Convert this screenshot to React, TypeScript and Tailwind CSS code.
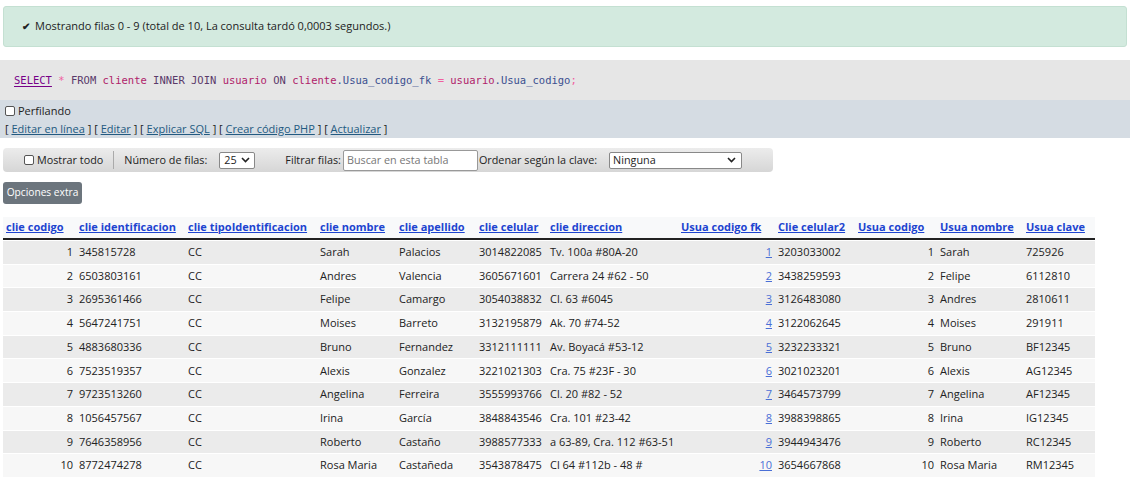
import React from 'react';

const cols = [
  { key: 'clie codigo', w: 'w-[73px]', num: true },
  { key: 'clie identificacion', w: 'w-[109px]' },
  { key: 'clie tipoIdentificacion', w: 'w-[132px]' },
  { key: 'clie nombre', w: 'w-[79px]' },
  { key: 'clie apellido', w: 'w-[80px]' },
  { key: 'clie celular', w: 'w-[71px]' },
  { key: 'clie direccion', w: 'w-[131px]' },
  { key: 'Usua codigo fk', w: 'w-[97px]', num: true, link: true },
  { key: 'Clie celular2', w: 'w-[80px]' },
  { key: 'Usua codigo', w: 'w-[82px]', num: true },
  { key: 'Usua nombre', w: 'w-[86px]' },
  { key: 'Usua clave', w: 'w-[72px]' },
];

const rows = [
  ['1', '345815728', 'CC', 'Sarah', 'Palacios', '3014822085', 'Tv. 100a #80A-20', '1', '3203033002', '1', 'Sarah', '725926'],
  ['2', '6503803161', 'CC', 'Andres', 'Valencia', '3605671601', 'Carrera 24 #62 - 50', '2', '3438259593', '2', 'Felipe', '6112810'],
  ['3', '2695361466', 'CC', 'Felipe', 'Camargo', '3054038832', 'Cl. 63 #6045', '3', '3126483080', '3', 'Andres', '2810611'],
  ['4', '5647241751', 'CC', 'Moises', 'Barreto', '3132195879', 'Ak. 70 #74-52', '4', '3122062645', '4', 'Moises', '291911'],
  ['5', '4883680336', 'CC', 'Bruno', 'Fernandez', '3312111111', 'Av. Boyacá #53-12', '5', '3232233321', '5', 'Bruno', 'BF12345'],
  ['6', '7523519357', 'CC', 'Alexis', 'Gonzalez', '3221021303', 'Cra. 75 #23F - 30', '6', '3021023201', '6', 'Alexis', 'AG12345'],
  ['7', '9723513260', 'CC', 'Angelina', 'Ferreira', '3555993766', 'Cl. 20 #82 - 52', '7', '3464573799', '7', 'Angelina', 'AF12345'],
  ['8', '1056457567', 'CC', 'Irina', 'García', '3848843546', 'Cra. 101 #23-42', '8', '3988398865', '8', 'Irina', 'IG12345'],
  ['9', '7646358956', 'CC', 'Roberto', 'Castaño', '3988577333', 'a 63-89, Cra. 112 #63-51', '9', '3944943476', '9', 'Roberto', 'RC12345'],
  ['10', '8772474278', 'CC', 'Rosa Maria', 'Castañeda', '3543878475', 'Cl 64 #112b - 48 #', '10', '3654667868', '10', 'Rosa Maria', 'RM12345'],
];

function Checkbox() {
  return <span className="inline-block w-[10px] h-[10px] border border-[#555] rounded-[2px] bg-white mr-[3px] align-[-1px]" />;
}

function Chevron() {
  return (
    <svg width="9" height="6" viewBox="0 0 9 6" className="ml-auto">
      <path d="M1 1 L4.5 4.5 L8 1" fill="none" stroke="#222" strokeWidth="1.6" />
    </svg>
  );
}

export default function App() {
  return (
    <div className="w-[1130px] h-[485px] bg-white text-[#222] overflow-hidden font-['Open_Sans','Noto_Sans',sans-serif] text-[11px]">
      <div className="px-[3px] pt-[6px]">
        {/* message */}
        <div className="h-[41px] bg-[#d3eadf] border border-[#c4e0d2] rounded-[3px] flex items-center pl-[18px] text-[11px] text-[#222]">
          <span className="text-[10px] font-bold mr-[5px]">✔</span>
          Mostrando filas 0 - 9 (total de 10, La consulta tardó 0,0003 segundos.)
        </div>
      </div>

      {/* SQL */}
      <div className="mt-[13px] h-[40px] bg-[#e6e6e6] flex items-center pl-[14px] pt-[1px] font-['DejaVu_Sans_Mono','Liberation_Mono',monospace] text-[10.5px] whitespace-pre">
        <span className="text-[#770088] underline underline-offset-2">SELECT</span>
        <span> </span>
        <span className="text-[#f0609e]">*</span>
        <span className="text-[#5a3a6a]"> FROM </span>
        <span className="text-[#b0226a]">cliente</span>
        <span className="text-[#5a3a6a]"> INNER JOIN </span>
        <span className="text-[#b0226a]">usuario</span>
        <span className="text-[#5a3a6a]"> ON </span>
        <span className="text-[#b0226a]">cliente</span>
        <span className="text-[#3b4f8f]">.Usua_codigo_fk </span>
        <span className="text-[#f0609e]">=</span>
        <span> </span>
        <span className="text-[#b0226a]">usuario</span>
        <span className="text-[#3b4f8f]">.Usua_codigo</span>
        <span className="text-[#f0609e]">;</span>
      </div>

      {/* profiling */}
      <div className="h-[38px] bg-[#d5dce3] pl-[5px] pt-[2px] text-[11px] leading-[18px]">
        <div>
          <Checkbox />
          Perfilando
        </div>
        <div>
          [ <a className="text-[#235a81] underline">Editar en línea</a> ] [ <a className="text-[#235a81] underline">Editar</a> ] [{' '}
          <a className="text-[#235a81] underline">Explicar SQL</a> ] [ <a className="text-[#235a81] underline">Crear código PHP</a> ] [{' '}
          <a className="text-[#235a81] underline">Actualizar</a> ]
        </div>
      </div>

      {/* navigation */}
      <div className="ml-[3px] mt-[10px] w-[770px] h-[24px] rounded-[4px] bg-gradient-to-b from-[#ececec] to-[#d6d6d6] flex items-center text-[10.8px] text-[#222]">
        <div className="ml-[21px] flex items-center">
          <Checkbox />
          Mostrar todo
        </div>
        <div className="ml-[10px] w-px h-[18px] bg-[#aaa]" />
        <div className="ml-[10px]">Número de filas:</div>
        <div className="ml-[12px] w-[36px] h-[17px] bg-white border border-[#888] rounded-[2px] flex items-center pl-[4px] pr-[4px]">
          25
          <Chevron />
        </div>
        <div className="ml-[30px]">Filtrar filas:</div>
        <div className="ml-[2px] w-[135px] h-[21px] bg-white border border-[#999] rounded-[2px] flex items-center pl-[3px] text-[#777]">
          Buscar en esta tabla
        </div>
        <div className="ml-[1px]">Ordenar según la clave:</div>
        <div className="ml-[12px] w-[133px] h-[17px] bg-white border border-[#888] rounded-[2px] flex items-center pl-[3px] pr-[5px]">
          Ninguna
          <Chevron />
        </div>
      </div>

      <div className="ml-[3px] mt-[10px] w-[79px] h-[22px] rounded-[3px] bg-[#6c757d] text-white text-[10.2px] flex items-center justify-center">
        Opciones extra
      </div>

      {/* table */}
      <div className="ml-[3px] mt-[13px] w-[1092px]">
        <div className="flex h-[23px] items-center bg-[#f8f9fa] border-b-2 border-[#222]">
          {cols.map((c) => (
            <div key={c.key} className={`${c.w} shrink-0 px-[3px] font-bold whitespace-nowrap`}>
              <a className="text-[#1d44d0] underline">{c.key}</a>
            </div>
          ))}
        </div>
        {rows.map((r, i) => (
          <div
            key={i}
            className={`flex h-[23.7px] items-center border-t border-[#fff] ${i % 2 === 0 ? 'bg-[#ebebeb]' : 'bg-[#f7f7f7]'}`}
          >
            {cols.map((c, j) => (
              <div key={c.key} className={`${c.w} shrink-0 px-[3px] whitespace-nowrap ${c.num ? 'text-right' : ''}`}>
                {c.link ? <a className="text-[#4a6fd6] underline">{r[j]}</a> : r[j]}
              </div>
            ))}
          </div>
        ))}
      </div>
    </div>
  );
}
